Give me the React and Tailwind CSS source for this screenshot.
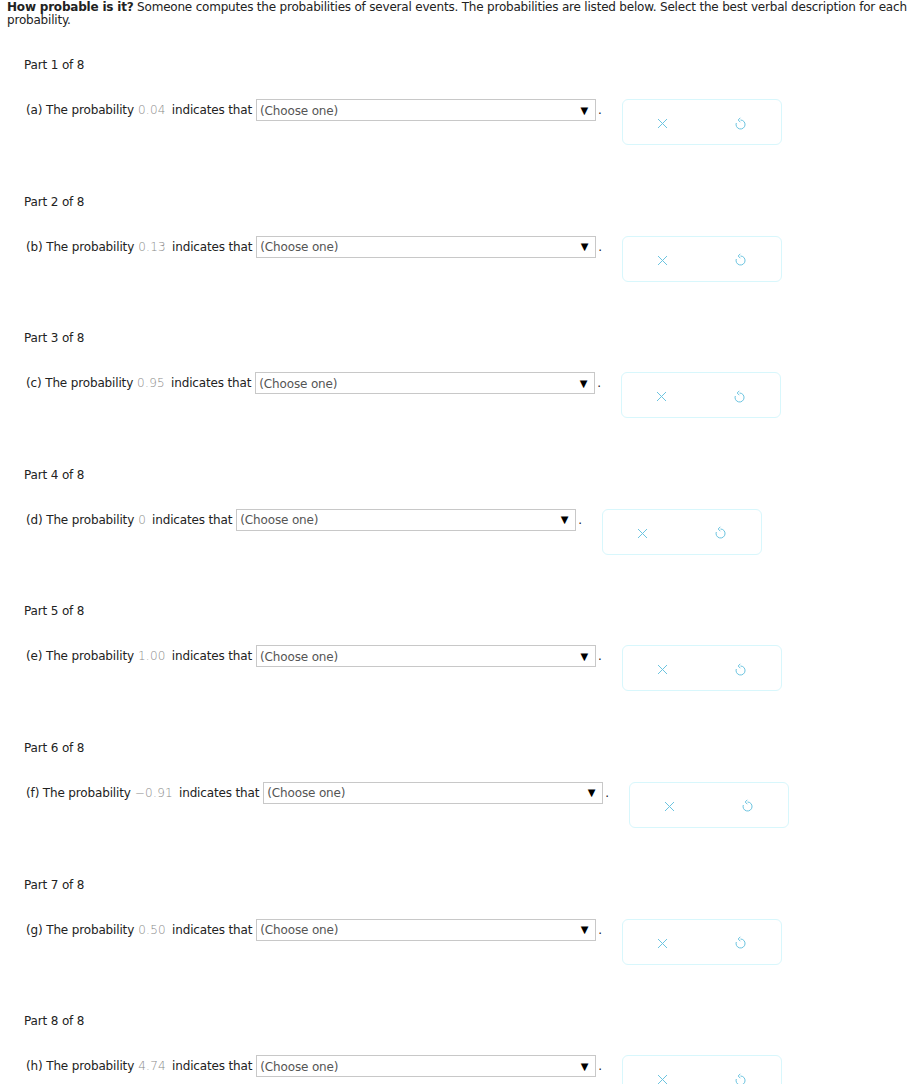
import React from "react";

const parts = [
  { letter: "a", value: "0.04" },
  { letter: "b", value: "0.13" },
  { letter: "c", value: "0.95" },
  { letter: "d", value: "0" },
  { letter: "e", value: "1.00" },
  { letter: "f", value: "\u22120.91" },
  { letter: "g", value: "0.50" },
  { letter: "h", value: "4.74" },
];

// small undo glyph, arrow at the top pointing left
const UndoIcon = () => (
  <svg width="13" height="14" viewBox="0 0 13 14" fill="none" stroke="#6cc4e0" strokeWidth="1">
    <path d="M6.5 3 A4.5 4.5 0 1 1 2.3 6" />
    <path d="M6.3 0.8 L4.2 3 L6.3 5.2" />
  </svg>
);

const CloseIcon = () => (
  <svg width="11" height="11" viewBox="0 0 11 11" stroke="#6cc4e0" strokeWidth="1">
    <path d="M1 1 L10 10 M10 1 L1 10" />
  </svg>
);

const Part = ({ index, letter, value }) => (
  <div className="mb-[49.6px]">
    <div className="h-[14px] leading-[14px] text-[#222]">Part {index} of 8</div>
    <div className="mt-[27px] flex items-start">
      <div className="flex items-center h-[22px] pl-[2px]">
        <span className="text-[#222]">({letter}) The probability</span>
        <span className="ml-[4px] mr-[6px] text-[#8a8a8a] tracking-[0.3px] font-light">{value}</span>
        <span className="text-[#222] mr-[4px]">indicates that</span>
        <div className="w-[340px] h-[22px] border border-[#c8c8c8] flex items-center justify-between pl-[3px] pr-[7px]">
          <span className="text-[#555] mt-[1px]">(Choose one)</span>
          <span className="text-[10px] text-black">▼</span>
        </div>
        <span className="ml-[2px] text-[#222]">.</span>
      </div>
      <div className="ml-[20px] w-[160px] h-[46px] border border-[#d8f7fc] rounded-[6px] flex items-center pt-[3px]">
        <div className="ml-[34px]"><CloseIcon /></div>
        <div className="ml-[66px]"><UndoIcon /></div>
      </div>
    </div>
  </div>
);

export default function App() {
  return (
    <div className="bg-white min-h-[1084px] text-[12px] text-[#222] tracking-[-0.15px]" style={{ fontFamily: '"DejaVu Sans", Verdana, sans-serif' }}>
      <div className="px-[7px] pt-[1px] leading-[13px] tracking-[-0.2px]">
        <span className="font-bold">How probable is it?</span> Someone computes the probabilities of several events. The probabilities are listed below. Select the best verbal description for each probability.
      </div>
      <div className="pl-[24px] mt-[31px]">
        {parts.map((p, i) => (
          <Part key={p.letter} index={i + 1} letter={p.letter} value={p.value} />
        ))}
      </div>
    </div>
  );
}
